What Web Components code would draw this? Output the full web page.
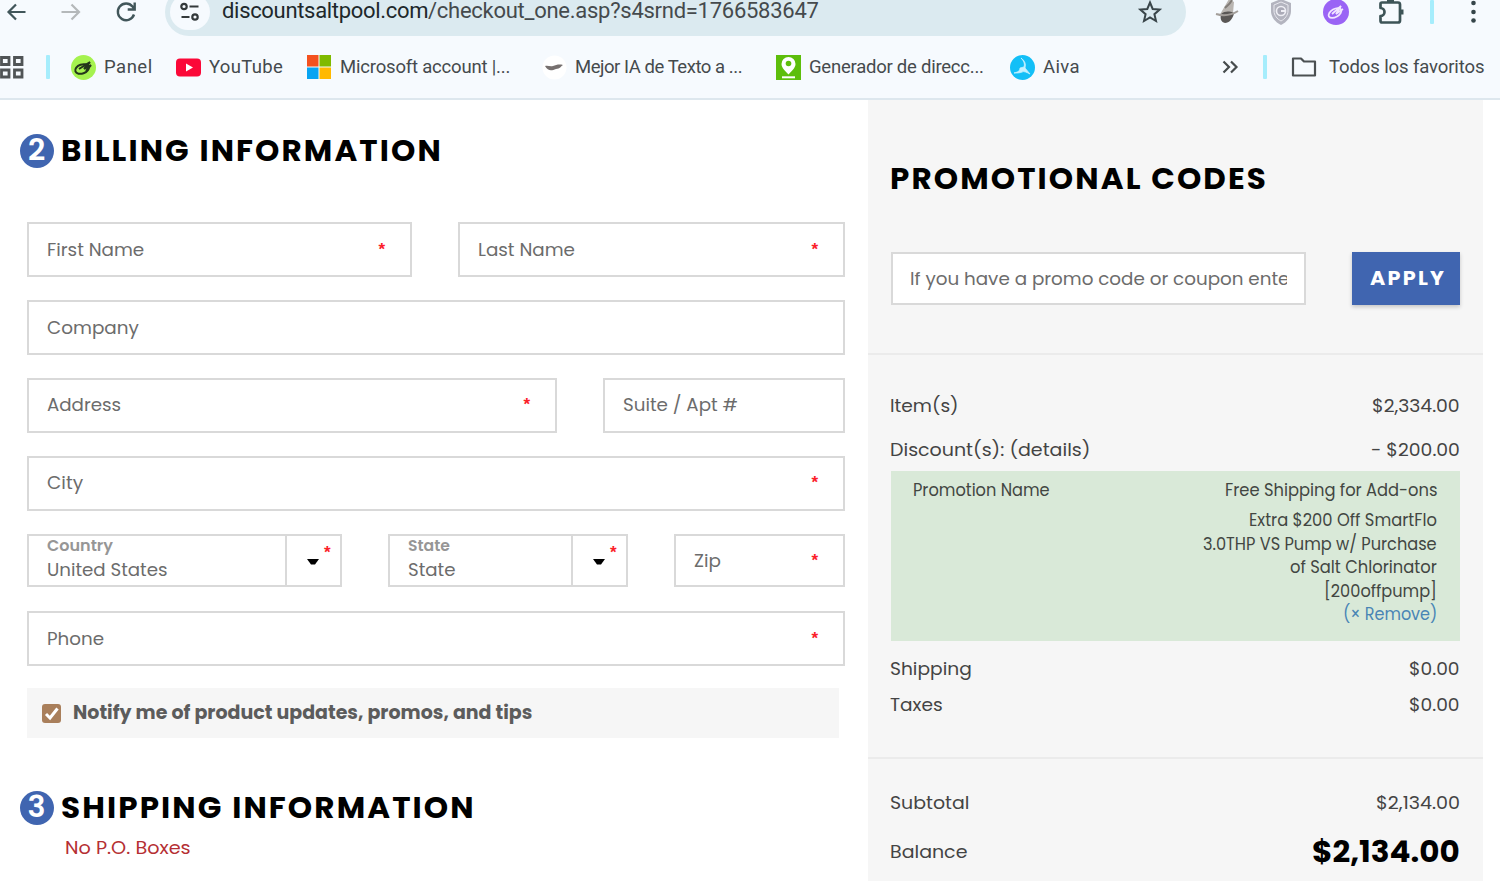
<!DOCTYPE html>
<html lang="en">
<head>
<meta charset="utf-8">
<title>Checkout</title>
<style>
  body { margin: 0; background: #fff; font-family: Poppins, Inter, "Open Sans", sans-serif; color: #444; overflow: hidden; }
  main { display: flex; height: 781px; }
</style>
</head>
<body>
<browser-bar></browser-bar>
<main>
  <billing-form></billing-form>
  <order-summary></order-summary>
</main>

<script>
class BookmarkItem extends HTMLElement {
  constructor() {
    super();
    this.attachShadow({ mode: 'open' });
    this.shadowRoot.innerHTML = `
      <style>
        :host { display: flex; align-items: center; flex: none; }
        ::slotted(svg) { display: block; margin-right: 8px; }
      </style>
      <slot name="icon"></slot><slot></slot>
    `;
  }
}

class BrowserBar extends HTMLElement {
  constructor() {
    super();
    this.attachShadow({ mode: 'open' });
    this.shadowRoot.innerHTML = `
      <style>
        :host { display: block; height: 98px; overflow: hidden; background: #f6fafe; border-bottom: 2px solid #dde7ee; font-family: Roboto, sans-serif; color: #454a4d; }
        svg { display: block; flex: none; }
        .toolbar { display: flex; align-items: center; height: 48px; margin-top: -12px; padding-left: 4px; }
        .omnibox { display: flex; align-items: center; box-sizing: border-box; width: 1021px; height: 48px; margin-left: 27px; padding: 0 23px 0 5px; border-radius: 24px; background: #dbeaf0; font-size: 22px; line-height: 20px; }
        .site { display: flex; align-items: center; justify-content: center; width: 40px; height: 36px; border-radius: 18px; background: #f6fafe; }
        .url { display: flex; margin-left: 12px; margin-top: -2px; flex: 1; }
        .domain { color: #20282b; }
        .divider { width: 4px; height: 24px; background: #a6edfc; border-radius: 1px; flex: none; }
        .bookmarks { display: flex; align-items: center; height: 62px; font-size: 18.5px; line-height: 24px; }
      </style>
      <div class="toolbar">
        <svg width="24" height="24" fill="none" stroke="#41565a" stroke-width="2.2"><path d="M21.5 12H4.5M12 4.5L4.5 12l7.5 7.5"/></svg>
        <svg style="margin-left:31px" width="24" height="24" fill="none" stroke="#b4b8ba" stroke-width="2.2"><path d="M2.5 12H20M12.5 4.5L20 12l-7.5 7.5"/></svg>
        <svg style="margin-left:31px" width="24" height="24" fill="none" stroke="#41565a" stroke-width="2.4"><path d="M20 14.5A8.3 8.3 0 1 1 18.5 6.5L20.5 9M20.7 2.5v7h-7"/></svg>
        <div class="omnibox">
          <div class="site">
            <svg width="22" height="20" fill="none" stroke="#33393b" stroke-width="2.2"><circle cx="5" cy="4.5" r="2.7"/><path d="M10.5 4.5h9M2.5 15h8"/><circle cx="16" cy="15" r="2.7"/></svg>
          </div>
          <div class="url">
            <fit-text w="206" spread class="domain">discountsaltpool.com</fit-text><fit-text w="391" spread>/checkout_one.asp?s4srnd=1766583647</fit-text>
          </div>
          <svg width="26" height="26" fill="none" stroke="#394549" stroke-width="2"><path d="M13 3.5l2.7 6.5 7 .6-5.3 4.6 1.6 6.8-6-3.6-6 3.6 1.6-6.8-5.3-4.6 7-.6z"/></svg>
        </div>
        <svg style="margin-left:28px" width="26" height="26"><path d="M15 0l5 3-1 11-14 3 3-5z" fill="#b9b5b1"/><path d="M7 15c4-3 8-3 13-1-1 6-5 10-9 10-4-1-5-4-4-9z" fill="#5a5755"/><path d="M2 15c7 2 14 2 22-3" stroke="#a39e9a" fill="none" stroke-width="2"/><path d="M11 9c2-2 5-4 7-8" stroke="#827d79" fill="none" stroke-width="2"/></svg>
        <svg style="margin-left:28px" width="26" height="26"><path d="M13 0l10 4v8c0 6-4 11-10 14C7 23 3 18 3 12V4z" fill="#b3b4bf"/><path d="M13 3l7 3v6c0 4-3 8-7 10-4-2-7-6-7-10V6z" fill="none" stroke="#e7e7ee"/><circle cx="13" cy="12" r="4.5" fill="#aaaab7" stroke="#eeeef4" stroke-width="1.6"/><path d="M13 12h4" stroke="#eeeef4" stroke-width="2"/></svg>
        <svg style="margin-left:29px" width="26" height="26"><circle cx="13" cy="13" r="13" fill="#9a63f5"/><g fill="none" stroke="#f2e6ff" stroke-width="1.7"><ellipse cx="12" cy="14" rx="7" ry="4" transform="rotate(-30 12 14)"/><path d="M9 15l9-8-5 8 7-5"/></g></svg>
        <svg style="margin-left:29px" width="26" height="26" fill="none" stroke="#3d5457" stroke-width="2.7" stroke-linejoin="round"><path d="M4 3.5h16q2 0 2 2v16q0 2-2 2H4q-1.5 0-1.5-2v-4.5a4 4 0 0 0 0-8V5q0-1.5 1.5-1.5z"/><path d="M9 2h7" stroke-width="4"/><path d="M23.5 10.5v5" stroke-width="4"/></svg>
        <div class="divider" style="margin-left:26px"></div>
        <svg style="margin-left:27px" width="24" height="26" fill="#354549"><circle cx="12.5" cy="4" r="2.3"/><circle cx="12.5" cy="13" r="2.3"/><circle cx="12.5" cy="21.5" r="2.3"/></svg>
      </div>
      <div class="bookmarks">
        <svg width="24" height="24" fill="none" stroke="#505456" stroke-width="2.8"><path d="M1.5 2.5h7.5v7H1.5zM14.5 2.5H22v7h-7.5zM1.5 15H9v7H1.5zM14.5 15H22v7h-7.5z"/></svg>
        <div class="divider" style="margin-left:22px"></div>
        <bookmark-item style="margin-left:21px">
          <svg slot="icon" width="25" height="25"><circle cx="12.5" cy="12.5" r="12.5" fill="#a5f24f"/><g fill="none" stroke="#23351b" stroke-width="2"><ellipse cx="11" cy="14" rx="7" ry="4.5" transform="rotate(-20 11 14)"/><path d="M8 14l11-7-6 7 7-4-5 6"/></g></svg>
          <fit-text w="48" spread>Panel</fit-text>
        </bookmark-item>
        <bookmark-item style="margin-left:24px">
          <svg slot="icon" width="25" height="24"><rect y="3.5" width="25" height="18" rx="4" fill="#fb0838"/><path d="M10 8.5l7 4-7 4z" fill="#fff"/></svg>
          <fit-text w="74" spread>YouTube</fit-text>
        </bookmark-item>
        <bookmark-item style="margin-left:24px">
          <svg slot="icon" width="25" height="24"><path fill="#f4511f" d="M0 0h11.5v11.5H0z"/><path fill="#7fba00" d="M12.5 0H24v11.5H12.5z"/><path fill="#08a4f2" d="M0 12.5h11.5V24H0z"/><path fill="#ffb900" d="M12.5 12.5H24V24H12.5z"/></svg>
          <fit-text w="170" spread>Microsoft account |...</fit-text>
        </bookmark-item>
        <bookmark-item style="margin-left:32px">
          <svg slot="icon" width="25" height="25"><circle cx="12.5" cy="12.5" r="12" fill="#fff"/><path d="M3 11c3-1 5 1 8 0 3-1 6-2 10-1-2 1-3 4-7 4-5 2-8 2-11-3z" fill="#76706f"/></svg>
          <fit-text w="168" spread>Mejor IA de Texto a ...</fit-text>
        </bookmark-item>
        <bookmark-item style="margin-left:33px">
          <svg slot="icon" width="25" height="25"><path fill="#5dbe0b" d="M0 0h25v25H0z"/><path d="M12.5 2a7 7 0 0 1 7 7c0 4-4 7-7 10.5-3-3.5-7-6.5-7-10.5a7 7 0 0 1 7-7z" fill="#fff"/><circle cx="12.5" cy="8.5" r="2.8" fill="#5dbe0b"/><path d="M6 22.3h13" stroke="#fff" stroke-width="2"/></svg>
          <fit-text w="175" spread>Generador de direcc...</fit-text>
        </bookmark-item>
        <bookmark-item style="margin-left:26px">
          <svg slot="icon" width="25" height="25"><circle cx="12.5" cy="12.5" r="12.5" fill="#13bff7"/><path d="M11 3c4 3 5 6 4 10l5 6c-4-2-6-3-8-2-2 1-5 1-8 1 4-1 6-2 6-5l4-1c1-3 0-6-3-9z" fill="#c5f1ff" stroke="#c5f1ff" stroke-width=".8"/></svg>
          <fit-text w="36" spread>Aiva</fit-text>
        </bookmark-item>
        <svg style="margin-left:143px" width="18" height="16" fill="none" stroke="#464b4d" stroke-width="2.2"><path d="M1.5 2.5L7 8l-5.5 5.5M9 2.5L14.5 8 9 13.5"/></svg>
        <div class="divider" style="margin-left:23px"></div>
        <bookmark-item style="margin-left:24px">
          <svg slot="icon" width="30" height="24" fill="none" stroke="#4b5052" stroke-width="2.2" stroke-linejoin="round"><path d="M2 3.5h8l3 3h11v14H2z"/></svg>
          <fit-text w="155" spread>Todos los favoritos</fit-text>
        </bookmark-item>
      </div>
    `;
  }
}

class StepHeading extends HTMLElement {
  constructor() {
    super();
    this.attachShadow({ mode: 'open' });
    this.shadowRoot.innerHTML = `
      <style>
        :host { display: flex; align-items: center; height: 34px; padding-left: 19.5px; font-size: 29.5px; line-height: 34px; font-weight: 700; color: #000; }
        b { width: 34px; height: 34px; margin-right: 7.5px; border-radius: 50%; background: #4065b0; color: #fff; font-size: 30px; line-height: 32px; font-weight: 600; text-align: center; }
        div { margin-top: -1px; }
      </style>
      <b>${this.getAttribute('step')}</b><div><slot></slot></div>
    `;
  }
}

class TextField extends HTMLElement {
  constructor() {
    super();
    this.attachShadow({ mode: 'open' });
    this.shadowRoot.innerHTML = `
      <style>
        :host { display: flex; align-items: center; justify-content: space-between; box-sizing: border-box; height: 55px; border: 2px solid #d9d9d9; background: #fff; padding: 0 25px 0 18px; font-size: 17px; line-height: 24px; color: #6c6c6c; }
        i { font: 700 17px/24px "Liberation Sans", sans-serif; color: #fb2029; padding-top: 1px; }
      </style>
      <slot></slot>${this.hasAttribute('required') ? '<i>*</i>' : ''}
    `;
  }
}

class SelectField extends HTMLElement {
  constructor() {
    super();
    this.attachShadow({ mode: 'open' });
    this.shadowRoot.innerHTML = `
      <style>
        :host { display: flex; box-sizing: border-box; height: 53px; border: 2px solid #d9d9d9; font-size: 17px; line-height: 24px; color: #6c6c6c; }
        .value { display: flex; flex-direction: column; flex: 1; padding-left: 18px; }
        .label { height: 22px; line-height: 20px; font-size: 16px; font-weight: 600; color: #969696; }
        .arrow { display: flex; width: 53px; border-left: 2px solid #d9d9d9; }
        svg { margin: 22px 0 0 20px; }
        i { font: 700 17px/24px "Liberation Sans", sans-serif; color: #fb2029; margin: 5px 0 0 4px; }
      </style>
      <div class="value"><div class="label"><slot name="label"></slot></div><div><slot></slot></div></div>
      <div class="arrow"><svg width="13" height="8"><path d="M0 1h12L8 6.5H4z" fill="#000"/></svg><i>*</i></div>
    `;
  }
}

class BillingForm extends HTMLElement {
  constructor() {
    super();
    this.attachShadow({ mode: 'open' });
    this.shadowRoot.innerHTML = `
      <style>
        :host { display: block; width: 868px; flex: none; padding-top: 34px; box-sizing: border-box; }
        .fields { display: grid; gap: 23px; margin: 54px 0 22px 27px; width: 818px; }
        .row { display: grid; gap: 46px; }
        .names { grid-template-columns: 385px 387px; }
        .address { grid-template-columns: 530px 242px; }
        .region { grid-template-columns: 315px 240px 171px; height: 54px; }
        .region text-field { height: 53px; }
        .raised { padding-bottom: 2px; }
        .notify { display: flex; align-items: center; box-sizing: border-box; width: 812px; height: 50px; margin: 0 0 53px 27px; padding: 0 15px 1px; background: #f6f6f6; font-size: 18.5px; line-height: 24px; font-weight: 700; color: #5c5c5c; }
        .notify svg { margin: 1px 12px 0 0; }
        .note { margin: 10px 0 0 65px; font-size: 18px; line-height: 26px; color: #b52f33; }
      </style>
      <step-heading step="2"><fit-text w="380" style="letter-spacing:2px">BILLING INFORMATION</fit-text></step-heading>
      <div class="fields">
        <div class="row names">
          <text-field required><fit-text w="97">First Name</fit-text></text-field>
          <text-field required><fit-text w="97">Last Name</fit-text></text-field>
        </div>
        <text-field><fit-text w="92">Company</fit-text></text-field>
        <div class="row address">
          <text-field required class="raised"><fit-text w="74">Address</fit-text></text-field>
          <text-field class="raised"><fit-text w="115">Suite / Apt #</fit-text></text-field>
        </div>
        <text-field required class="raised"><fit-text w="36">City</fit-text></text-field>
        <div class="row region">
          <select-field><fit-text slot="label" w="66">Country</fit-text><fit-text w="121">United States</fit-text></select-field>
          <select-field><fit-text slot="label" w="42">State</fit-text><fit-text w="47">State</fit-text></select-field>
          <text-field required><fit-text w="27">Zip</fit-text></text-field>
        </div>
        <text-field required><fit-text w="57">Phone</fit-text></text-field>
      </div>
      <div class="notify">
        <svg width="19" height="19"><rect width="19" height="19" rx="3" fill="#a97f5b"/><path d="M4 10l4 4 7.5-9.5" fill="none" stroke="#fff" stroke-width="3"/></svg>
        <fit-text w="459">Notify me of product updates, promos, and tips</fit-text>
      </div>
      <step-heading step="3"><fit-text w="413" style="letter-spacing:2px">SHIPPING INFORMATION</fit-text></step-heading>
      <div class="note"><fit-text w="126">No P.O. Boxes</fit-text></div>
    `;
  }
}

class SummaryRow extends HTMLElement {
  constructor() {
    super();
    this.attachShadow({ mode: 'open' });
    this.shadowRoot.innerHTML = `
      <style>
        :host { display: flex; justify-content: space-between; align-items: center; height: 36px; margin: 0 23px 0 22px; font-size: 17.5px; line-height: 25px; color: #444; }
      </style>
      <slot></slot>
    `;
  }
}

class OrderSummary extends HTMLElement {
  constructor() {
    super();
    this.attachShadow({ mode: 'open' });
    this.shadowRoot.innerHTML = `
      <style>
        :host { display: block; width: 615px; height: 781px; background: #f6f6f6; }
        h2 { margin: 0; padding: 62px 0 0 22px; height: 90px; font-size: 29.5px; line-height: 34px; font-weight: 700; color: #000; }
        .promo { display: flex; gap: 46px; padding-left: 23px; height: 101px; }
        .promo text-field { width: 415px; height: 53px; padding: 0 17px; }
        .clip { display: block; width: 378px; overflow: hidden; white-space: nowrap; }
        button { width: 108px; height: 53px; border: 0; padding: 0 0 0 2px; background: #4065b0; box-shadow: 0 2px 4px rgba(0,0,0,.2); font: inherit; font-size: 18.5px; line-height: 24px; font-weight: 700; color: #fff; }
        hr { margin: 0; border: 0; height: 2px; background: #ebebeb; }
        .details { display: flex; justify-content: space-between; box-sizing: border-box; height: 170px; margin: 0 23px 10px; padding: 8px 23px 0 21.5px; background: #d9e9d8; font-size: 17px; line-height: 23.4px; color: #424642; }
        .promos { display: flex; flex-direction: column; align-items: flex-end; }
        .promos > :first-child { margin-bottom: 7px; }
        .remove { color: #4985b5; }
        .total { font-size: 30px; line-height: 36px; font-weight: 700; color: #000; }
      </style>
      <h2><fit-text w="376" style="letter-spacing:2px">PROMOTIONAL CODES</fit-text></h2>
      <div class="promo">
        <text-field><span class="clip"><fit-text w="379">If you have a promo code or coupon ente</fit-text></span></text-field>
        <button><fit-text w="74" style="letter-spacing:2px">APPLY</fit-text></button>
      </div>
      <hr>
      <summary-row style="margin-top:33px"><fit-text w="69">Item(s)</fit-text><fit-text w="88">$2,334.00</fit-text></summary-row>
      <summary-row style="margin-top:8px"><fit-text w="200">Discount(s): (details)</fit-text><fit-text w="89">- $200.00</fit-text></summary-row>
      <div style="height:3px"></div>
      <div class="details">
        <fit-text w="137">Promotion Name</fit-text>
        <div class="promos">
          <fit-text w="212">Free Shipping for Add-ons</fit-text>
          <fit-text w="188">Extra $200 Off SmartFlo</fit-text>
          <fit-text w="234">3.0THP VS Pump w/ Purchase</fit-text>
          <fit-text w="147">of Salt Chlorinator</fit-text>
          <fit-text w="113">[200offpump]</fit-text>
          <fit-text w="94" class="remove">(× Remove)</fit-text>
        </div>
      </div>
      <summary-row><fit-text w="82">Shipping</fit-text><fit-text w="51">$0.00</fit-text></summary-row>
      <summary-row><fit-text w="53">Taxes</fit-text><fit-text w="51">$0.00</fit-text></summary-row>
      <hr style="margin-top:34px">
      <summary-row style="margin-top:26px"><fit-text w="79">Subtotal</fit-text><fit-text w="84">$2,134.00</fit-text></summary-row>
      <summary-row style="margin-top:13px"><fit-text w="77">Balance</fit-text><fit-text w="148" class="total">$2,134.00</fit-text></summary-row>
    `;
  }
}

// Sets its text to the width in "w": by glyph width, or by tracking with "spread"
class FitText extends HTMLElement {
  constructor() {
    super();
    this.attachShadow({ mode: 'open' });
    this.shadowRoot.innerHTML = `
      <style>
        :host { display: inline-block; flex: none; vertical-align: top; text-align: left; white-space: nowrap; }
        span { display: inline-block; vertical-align: top; transform-origin: 0 50%; }
      </style>
      <span><slot></slot></span>
    `;
  }

  connectedCallback() {
    const span = this.shadowRoot.querySelector('span');
    const width = Number(this.getAttribute('w'));
    const natural = span.offsetWidth;
    this.style.width = width + 'px';
    if (!natural) {
      return;
    }
    if (this.hasAttribute('spread')) {
      span.style.letterSpacing = (width - natural) / (this.textContent.length - 1) + 'px';
    } else {
      const tracking = parseFloat(getComputedStyle(this).letterSpacing) || 0;
      span.style.transform = `scaleX(${width / (natural - tracking)})`;
    }
  }
}

customElements.define('bookmark-item', BookmarkItem);
customElements.define('browser-bar', BrowserBar);
customElements.define('step-heading', StepHeading);
customElements.define('text-field', TextField);
customElements.define('select-field', SelectField);
customElements.define('billing-form', BillingForm);
customElements.define('summary-row', SummaryRow);
customElements.define('order-summary', OrderSummary);
customElements.define('fit-text', FitText);
</script>
</body>
</html>
